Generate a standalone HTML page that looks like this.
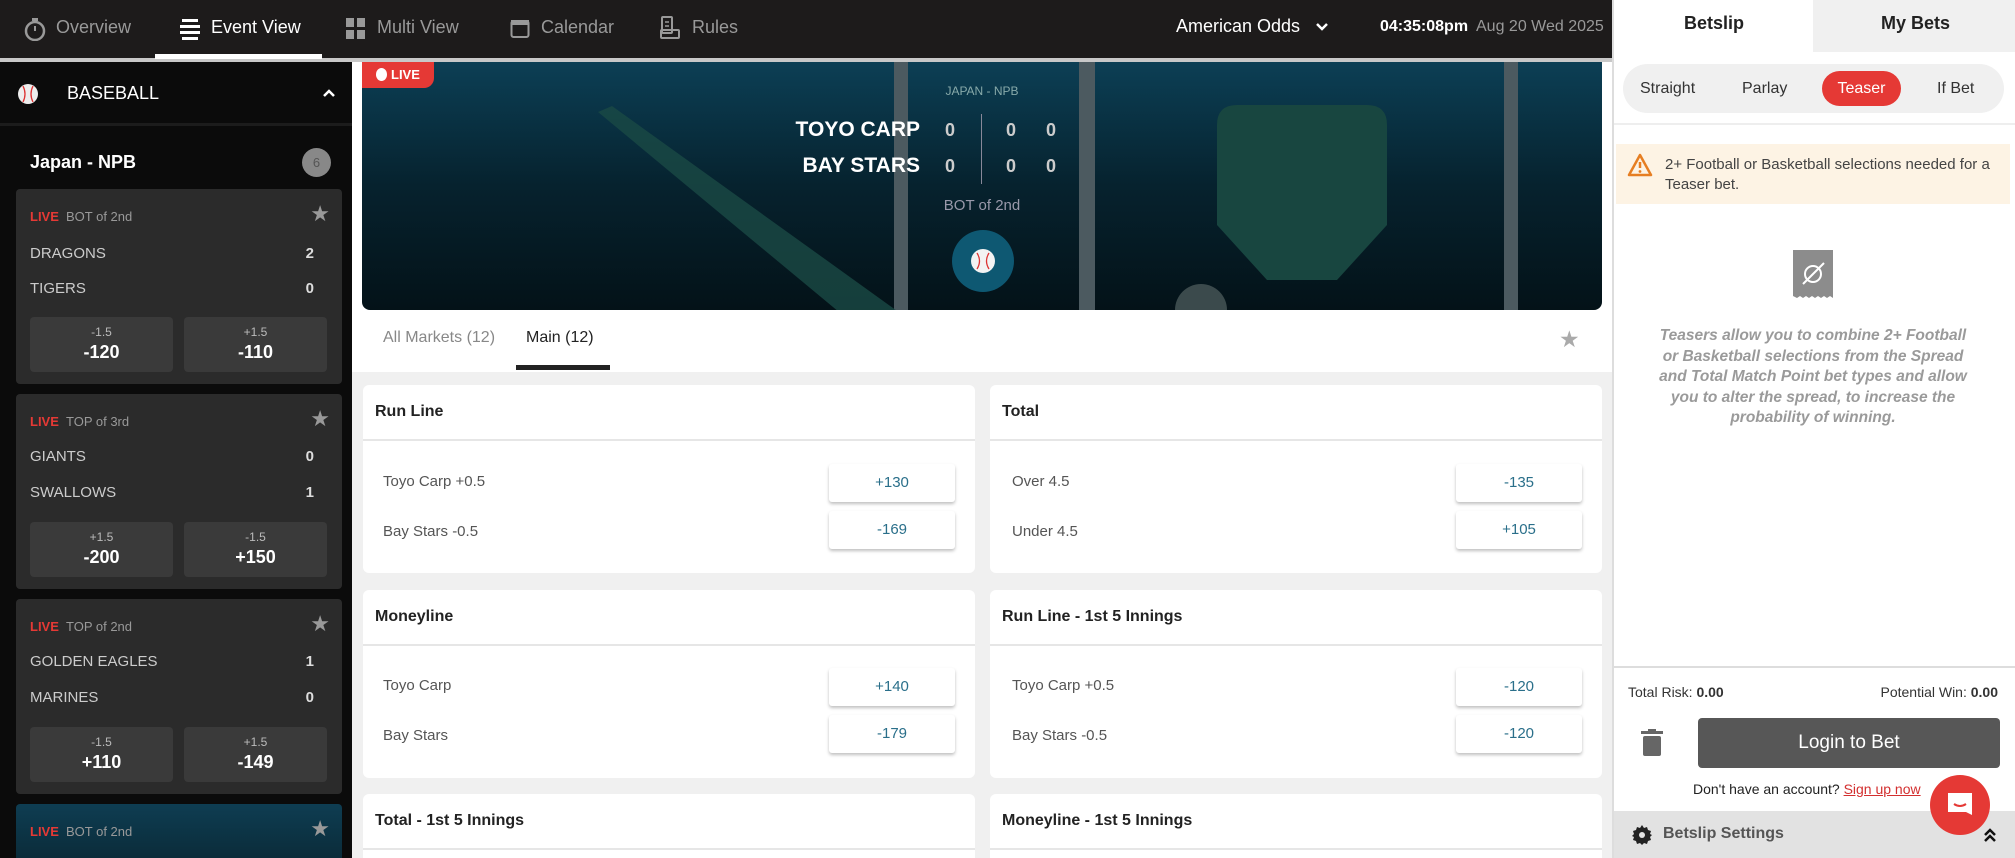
<!DOCTYPE html>
<html><head><meta charset="utf-8">
<style>
*{box-sizing:border-box;margin:0;padding:0}
html,body{width:2015px;height:858px;overflow:hidden}
body{background:#f0f0f0;font-family:"Liberation Sans",sans-serif}
#w{position:relative;width:2015px;height:858px;overflow:hidden}
.a{position:absolute;white-space:nowrap}
.nav{left:0;top:0;width:1612px;height:58px;background:#1d1b1b}
.navt{font-size:18px;color:#999;top:17px}
.sb{left:0;top:62px;width:352px;height:796px;background:#0b0b0b}
.card{left:16px;width:326px;height:195px;background:#2b2b2b;border-radius:4px}
.card .live{left:14px;top:20px;font-size:13px;color:#e53935;font-weight:bold}
.card .st{left:50px;top:20px;font-size:13px;color:#999}
.card .tm{left:14px;font-size:15px;color:#ccc}
.card .sc{right:28px;font-size:15px;color:#ddd;font-weight:bold}
.card .btn{width:143px;height:55px;background:#3a3a3a;border-radius:4px;top:128px;text-align:center}
.btn .l{display:block;font-size:12px;color:#bbb;margin-top:8px}
.btn .v{display:block;font-size:18px;color:#fff;font-weight:bold;margin-top:3px}
.star{color:#999;font-size:22px}
.mc{background:#fff;border-radius:6px;width:612px;height:188px}
.mc .h{left:12px;top:18px;font-size:16px;font-weight:bold;color:#222}
.mc .hl{left:0;top:54px;width:100%;height:2px;background:#e6e6e6}
.mc .r{left:20px;font-size:15px;color:#555}
.ob{width:126px;height:38px;background:#fff;border-radius:3px;box-shadow:0 2px 3px rgba(0,0,0,.25);text-align:center;line-height:38px;font-size:15px;color:#2a6f8a;right:20px}
</style></head><body><div id="w">
<div class="a nav"></div>
<div class="a" style="left:0;top:58px;width:1612px;height:4px;background:#c8c8c8"></div>
<svg class="a" style="left:24px;top:17px" width="22" height="24" viewBox="0 0 22 24"><circle cx="11" cy="14" r="9" fill="none" stroke="#999" stroke-width="2.5"/><rect x="8" y="1" width="6" height="3" fill="#999"/><path d="M11 14V9" stroke="#999" stroke-width="2"/></svg>
<div class="a navt" style="left:56px">Overview</div>
<svg class="a" style="left:180px;top:18px" width="20" height="22"><rect x="2" y="1" width="16" height="3" fill="#fff"/><rect x="0" y="7" width="20" height="3" fill="#fff"/><rect x="0" y="13" width="20" height="3" fill="#fff"/><rect x="2" y="19" width="16" height="3" fill="#fff"/></svg>
<div class="a navt" style="left:211px;color:#fff">Event View</div>
<div class="a" style="left:155px;top:54px;width:167px;height:5px;background:#fff"></div>
<svg class="a" style="left:346px;top:18px" width="20" height="22"><rect x="0" y="0" width="8" height="9" fill="#999"/><rect x="11" y="0" width="8" height="9" fill="#999"/><rect x="0" y="12" width="8" height="9" fill="#999"/><rect x="11" y="12" width="8" height="9" fill="#999"/></svg>
<div class="a navt" style="left:377px">Multi View</div>
<svg class="a" style="left:510px;top:17px" width="20" height="22"><rect x="1.5" y="4" width="17" height="16" rx="2" fill="none" stroke="#999" stroke-width="2"/><rect x="1" y="3" width="18" height="5" fill="#999"/></svg>
<div class="a navt" style="left:541px">Calendar</div>
<svg class="a" style="left:660px;top:16px" width="20" height="24"><rect x="2" y="1" width="10" height="16" rx="1" fill="none" stroke="#999" stroke-width="2"/><rect x="1" y="14" width="18" height="8" rx="1" fill="none" stroke="#999" stroke-width="2"/><path d="M5 6h4M5 10h4" stroke="#999" stroke-width="1.5"/></svg>
<div class="a navt" style="left:692px">Rules</div>
<div class="a" style="left:1176px;top:16px;font-size:18px;color:#fff">American Odds</div>
<svg class="a" style="left:1315px;top:22px" width="14" height="10"><path d="M2 2l5 5 5-5" stroke="#fff" stroke-width="2.5" fill="none"/></svg>
<div class="a" style="left:1380px;top:18px;font-size:16px;color:#fff;font-weight:bold">04:35:08pm</div>
<div class="a" style="left:1476px;top:18px;font-size:16px;color:#999">Aug 20 Wed 2025</div>

<div class="a sb"></div>
<svg class="a" style="left:17px;top:83px" width="22" height="22"><circle cx="11" cy="11" r="10" fill="#eee"/><path d="M6 3q4 8 0 16M16 3q-4 8 0 16" stroke="#d33" stroke-width="1.3" fill="none"/></svg>
<div class="a" style="left:67px;top:83px;font-size:18px;color:#fff">BASEBALL</div>
<svg class="a" style="left:322px;top:88px" width="14" height="10"><path d="M2 8l5-5 5 5" stroke="#fff" stroke-width="2.5" fill="none"/></svg>
<div class="a" style="left:0;top:123px;width:352px;height:3px;background:#1c1c1c"></div>
<div class="a" style="left:30px;top:152px;font-size:18px;color:#fff;font-weight:bold">Japan - NPB</div>
<div class="a" style="left:302px;top:148px;width:29px;height:29px;border-radius:50%;background:#888;color:#555;font-size:13px;text-align:center;line-height:29px">6</div>

<div class="a card" style="top:189px"><div class="a live">LIVE</div><div class="a st">BOT of 2nd</div><div class="a star" style="right:12px;top:12px">★</div>
<div class="a tm" style="top:56px">DRAGONS</div><div class="a sc" style="top:56px">2</div>
<div class="a tm" style="top:91px">TIGERS</div><div class="a sc" style="top:91px">0</div>
<div class="a btn" style="left:14px"><span class="l">-1.5</span><span class="v">-120</span></div>
<div class="a btn" style="left:168px"><span class="l">+1.5</span><span class="v">-110</span></div></div>

<div class="a card" style="top:394px"><div class="a live">LIVE</div><div class="a st">TOP of 3rd</div><div class="a star" style="right:12px;top:12px">★</div>
<div class="a tm" style="top:54px">GIANTS</div><div class="a sc" style="top:54px">0</div>
<div class="a tm" style="top:90px">SWALLOWS</div><div class="a sc" style="top:90px">1</div>
<div class="a btn" style="left:14px"><span class="l">+1.5</span><span class="v">-200</span></div>
<div class="a btn" style="left:168px"><span class="l">-1.5</span><span class="v">+150</span></div></div>

<div class="a card" style="top:599px"><div class="a live">LIVE</div><div class="a st">TOP of 2nd</div><div class="a star" style="right:12px;top:12px">★</div>
<div class="a tm" style="top:54px">GOLDEN EAGLES</div><div class="a sc" style="top:54px">1</div>
<div class="a tm" style="top:90px">MARINES</div><div class="a sc" style="top:90px">0</div>
<div class="a btn" style="left:14px"><span class="l">-1.5</span><span class="v">+110</span></div>
<div class="a btn" style="left:168px"><span class="l">+1.5</span><span class="v">-149</span></div></div>

<div class="a card" style="top:804px;height:54px;border-radius:4px 4px 0 0;background:linear-gradient(#0e3d52,#0b2c3a)"><div class="a live">LIVE</div><div class="a st">BOT of 2nd</div><div class="a star" style="right:12px;top:12px">★</div></div>

<div class="a" style="left:352px;top:62px;width:1260px;height:310px;background:#fff"></div>
<div class="a" style="left:362px;top:62px;width:1240px;height:248px;border-radius:0 0 8px 8px;overflow:hidden;background:linear-gradient(#0c3f55 0%,#06222e 50%,#041218 100%)">
 <div class="a" style="left:532px;top:0;width:14px;height:248px;background:#4c5a60"></div>
 <div class="a" style="left:717px;top:0;width:16px;height:248px;background:#4c5a60"></div>
 <div class="a" style="left:1142px;top:0;width:14px;height:248px;background:#4c5a60"></div>
 <svg class="a" style="left:0;top:0" width="700" height="248"><path d="M236 50l14-6 320 230-40 20z" fill="#1a4a45" opacity=".8"/></svg>
 <svg class="a" style="left:855px;top:43px" width="170" height="175"><path d="M20 0h130q20 0 20 20v100l-50 55q-35 5-70 0l-50-55v-100q0-20 20-20z" fill="#184640"/></svg>
 <div class="a" style="left:590px;top:168px;width:62px;height:62px;border-radius:50%;background:#0e5872"></div>
 <svg class="a" style="left:608px;top:186px" width="26" height="26"><circle cx="13" cy="13" r="12" fill="#f3f3f3"/><path d="M7 5q5 8 0 16M19 5q-5 8 0 16" stroke="#d33" stroke-width="1.3" fill="none"/></svg>
 <div class="a" style="left:813px;top:222px;width:52px;height:52px;border-radius:50%;background:#3b4a4c"></div>
 <div class="a" style="left:580px;top:22px;width:80px;text-align:center;font-size:12px;color:#8aa">JAPAN - NPB</div>
 <div class="a" style="right:682px;top:56px;font-size:21px;font-weight:bold;color:#fff">TOYO CARP</div>
 <div class="a" style="right:682px;top:92px;font-size:21px;font-weight:bold;color:#fff">BAY STARS</div>
 <div class="a" style="left:583px;top:58px;font-size:18px;color:#ccc;font-weight:bold">0</div>
 <div class="a" style="left:583px;top:94px;font-size:18px;color:#ccc;font-weight:bold">0</div>
 <div class="a" style="left:619px;top:52px;width:1px;height:70px;background:#889"></div>
 <div class="a" style="left:644px;top:58px;font-size:18px;color:#ccc;font-weight:bold">0</div>
 <div class="a" style="left:644px;top:94px;font-size:18px;color:#ccc;font-weight:bold">0</div>
 <div class="a" style="left:684px;top:58px;font-size:18px;color:#ccc;font-weight:bold">0</div>
 <div class="a" style="left:684px;top:94px;font-size:18px;color:#ccc;font-weight:bold">0</div>
 <div class="a" style="left:580px;top:135px;width:80px;text-align:center;font-size:15px;color:#99a">BOT of 2nd</div>
 <div class="a" style="left:0;top:0;width:72px;height:26px;background:#e53935;border-radius:0 0 10px 0;color:#fff;font-size:13px;font-weight:bold;line-height:26px;padding-left:14px">
 <span style="display:inline-block;width:11px;height:13px;border-radius:50%;background:#fff;vertical-align:-2px;margin-right:4px"></span>LIVE</div>
</div>
<div class="a" style="left:383px;top:329px;font-size:16px;color:#888">All Markets (12)</div>
<div class="a" style="left:526px;top:329px;font-size:16px;color:#222">Main (12)</div>
<div class="a" style="left:516px;top:365px;width:94px;height:5px;background:#222"></div>
<div class="a" style="left:1559px;top:326px;color:#aaa;font-size:23px">★</div>

<div class="a mc" style="left:363px;top:385px"><div class="a h">Run Line</div><div class="a hl"></div>
<div class="a r" style="top:88px">Toyo Carp +0.5</div><div class="a r" style="top:138px">Bay Stars -0.5</div>
<div class="a ob" style="top:79px">+130</div><div class="a ob" style="top:126px">-169</div></div>
<div class="a mc" style="left:990px;top:385px"><div class="a h">Total</div><div class="a hl"></div>
<div class="a r" style="left:22px;top:88px">Over 4.5</div><div class="a r" style="left:22px;top:138px">Under 4.5</div>
<div class="a ob" style="top:79px">-135</div><div class="a ob" style="top:126px">+105</div></div>
<div class="a mc" style="left:363px;top:590px"><div class="a h">Moneyline</div><div class="a hl"></div>
<div class="a r" style="top:87px">Toyo Carp</div><div class="a r" style="top:137px">Bay Stars</div>
<div class="a ob" style="top:78px">+140</div><div class="a ob" style="top:125px">-179</div></div>
<div class="a mc" style="left:990px;top:590px"><div class="a h">Run Line - 1st 5 Innings</div><div class="a hl"></div>
<div class="a r" style="left:22px;top:87px">Toyo Carp +0.5</div><div class="a r" style="left:22px;top:137px">Bay Stars -0.5</div>
<div class="a ob" style="top:78px">-120</div><div class="a ob" style="top:125px">-120</div></div>
<div class="a mc" style="left:363px;top:794px;height:64px;border-radius:6px 6px 0 0"><div class="a h">Total - 1st 5 Innings</div><div class="a hl"></div></div>
<div class="a mc" style="left:990px;top:794px;height:64px;border-radius:6px 6px 0 0"><div class="a h">Moneyline - 1st 5 Innings</div><div class="a hl"></div></div>

<div class="a" style="left:1612px;top:0;width:403px;height:858px;background:#fff;border-left:2px solid #ddd"></div>
<div class="a" style="left:1813px;top:0;width:202px;height:52px;background:#f0f0f0"></div>
<div class="a" style="left:1684px;top:13px;font-size:18px;color:#222;font-weight:bold">Betslip</div>
<div class="a" style="left:1881px;top:13px;font-size:18px;color:#222;font-weight:bold">My Bets</div>
<div class="a" style="left:1623px;top:64px;width:381px;height:49px;background:#f0f0f0;border-radius:25px"></div>
<div class="a" style="left:1640px;top:80px;font-size:16px;color:#333">Straight</div>
<div class="a" style="left:1742px;top:80px;font-size:16px;color:#333">Parlay</div>
<div class="a" style="left:1822px;top:71px;width:79px;height:35px;background:#e53935;border-radius:18px;color:#fff;font-size:16px;text-align:center;line-height:35px">Teaser</div>
<div class="a" style="left:1937px;top:80px;font-size:16px;color:#333">If Bet</div>
<div class="a" style="left:1614px;top:123px;width:401px;height:2px;background:#eee"></div>
<div class="a" style="left:1616px;top:144px;width:394px;height:60px;background:#fdf3e4"></div>
<svg class="a" style="left:1627px;top:153px" width="26" height="24"><path d="M13 2L24 22H2z" fill="none" stroke="#e67e22" stroke-width="2.5" stroke-linejoin="round"/><path d="M13 9v6" stroke="#e67e22" stroke-width="2.5"/><circle cx="13" cy="18.5" r="1.4" fill="#e67e22"/></svg>
<div class="a" style="left:1665px;top:155px;font-size:15px;color:#444;line-height:20px;white-space:normal;width:340px">2+ Football or Basketball selections needed for a Teaser bet.</div>
<svg class="a" style="left:1793px;top:250px" width="41" height="51"><path d="M0 0h40v48l-3-2-3 2-3-2-3 2-3-2-3 2-3-2-3 2-3-2-3 2-3-2-3 2-4-2z" fill="#8c8c8c"/><circle cx="20" cy="24" r="8" fill="none" stroke="#fff" stroke-width="2"/><path d="M10 34L31 13" stroke="#fff" stroke-width="2"/></svg>
<div class="a" style="left:1650px;top:326px;width:326px;text-align:center;white-space:normal;font-size:15.5px;font-style:italic;font-weight:bold;color:#9a9a9a;line-height:20.5px">Teasers allow you to combine 2+ Football or Basketball selections from the Spread and Total Match Point bet types and allow you to alter the spread, to increase the probability of winning.</div>
<div class="a" style="left:1614px;top:666px;width:401px;height:2px;background:#ddd"></div>
<div class="a" style="left:1628px;top:684px;font-size:14px;color:#333">Total Risk: <b>0.00</b></div>
<div class="a" style="right:17px;top:684px;font-size:14px;color:#333">Potential Win: <b>0.00</b></div>
<svg class="a" style="left:1641px;top:729px" width="22" height="28"><rect x="0" y="2" width="22" height="3" fill="#666"/><rect x="7" y="0" width="8" height="3" fill="#666"/><rect x="2" y="7" width="18" height="20" rx="2" fill="#666"/></svg>
<div class="a" style="left:1698px;top:718px;width:302px;height:50px;background:#575757;border-radius:4px;color:#fff;font-size:19px;text-align:center;line-height:50px">Login to Bet</div>
<div class="a" style="left:1693px;top:781px;font-size:14px;color:#222">Don't have an account? <span style="color:#d32f2f;text-decoration:underline">Sign up now</span></div>
<div class="a" style="left:1614px;top:811px;width:401px;height:47px;background:#e2e2e2"></div>
<svg class="a" style="left:1632px;top:825px" width="20" height="20" viewBox="0 0 20 20"><path d="M10 0l2 3 3-1 1 3 3 1-1 3 2 1-2 2 1 3-3 1-1 3-3-1-2 2-2-2-3 1-1-3-3-1 1-3-2-1 2-2-1-3 3-1 1-3 3 1z" fill="#222"/><circle cx="10" cy="10" r="3" fill="#e2e2e2"/></svg>
<div class="a" style="left:1663px;top:825px;font-size:16px;color:#555;font-weight:bold">Betslip Settings</div>
<svg class="a" style="left:1982px;top:826px" width="16" height="18"><path d="M3 9l5-5 5 5M3 15l5-5 5 5" stroke="#111" stroke-width="2.5" fill="none"/></svg>
<div class="a" style="left:1930px;top:775px;width:60px;height:60px;border-radius:50%;background:#e53935"></div>
<svg class="a" style="left:1946px;top:791px" width="28" height="30"><path d="M2 2h24v22l-6-3H2z" fill="#fff"/><path d="M8 13q6 4 12 0" stroke="#e53935" stroke-width="2" fill="none"/></svg>
</div></body></html>
